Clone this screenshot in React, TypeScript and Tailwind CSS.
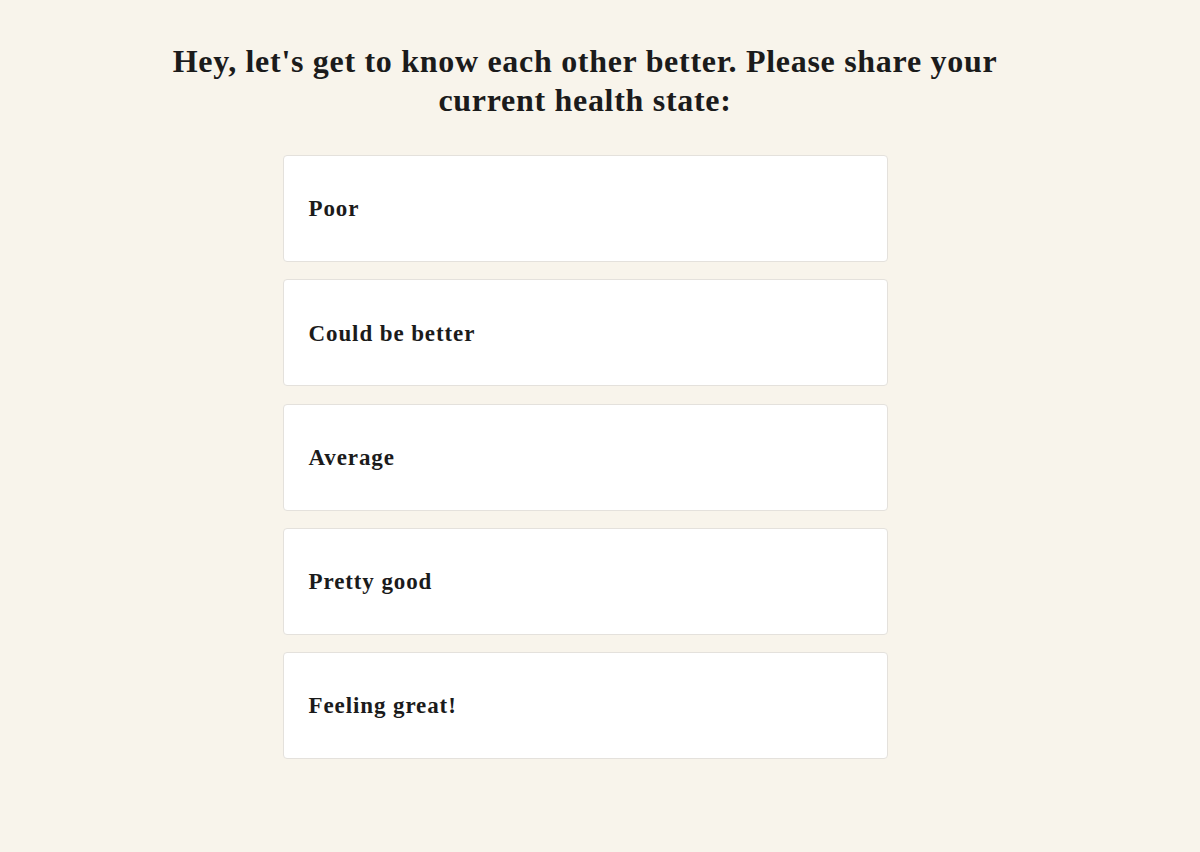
import React from "react";

const options = ["Poor", "Could be better", "Average", "Pretty good", "Feeling great!"];

export default function App() {
  return (
    <div
      className="min-h-[852px] w-full bg-[#f8f4eb] text-[#1b1b1b]"
      style={{ fontFamily: '"Liberation Serif", "DejaVu Serif", serif' }}
    >
      <div className="flex flex-col items-center pr-[30px] pt-[42px]">
        <h1 className="max-w-[840px] text-center text-[32px] font-bold leading-[39px] tracking-[0.7px]">
          Hey, let's get to know each other better. Please share your current health state:
        </h1>
        <div className="mt-[35px] flex w-[605px] flex-col gap-[17.25px]">
          {options.map((o) => (
            <button
              key={o}
              className="flex h-[107px] items-center rounded-[4px] border border-[#e4e1dc] bg-white px-[25px] pt-[2px] text-left text-[23px] font-bold tracking-[0.9px]"
            >
              {o}
            </button>
          ))}
        </div>
      </div>
    </div>
  );
}
